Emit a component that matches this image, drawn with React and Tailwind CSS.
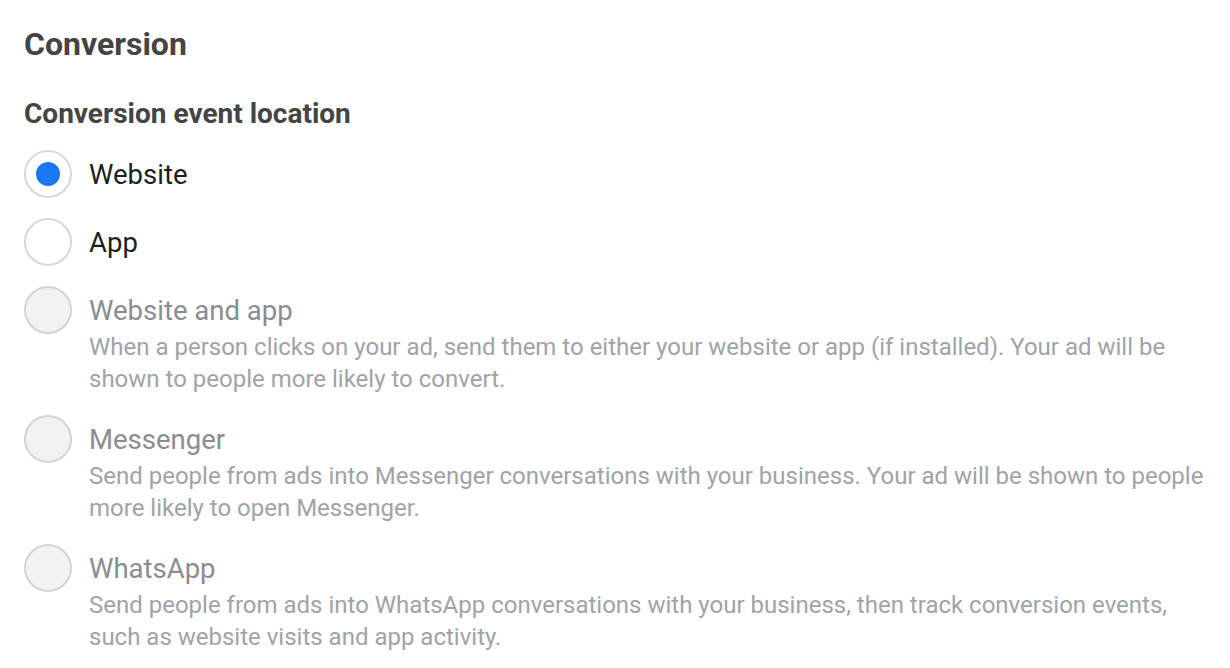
import React, { useState } from 'react'

const options = [
  { id: 'website', label: 'Website' },
  { id: 'app', label: 'App' },
  {
    id: 'website-app',
    label: 'Website and app',
    disabled: true,
    desc: 'When a person clicks on your ad, send them to either your website or app (if installed). Your ad will be shown to people more likely to convert.',
  },
  {
    id: 'messenger',
    label: 'Messenger',
    disabled: true,
    desc: 'Send people from ads into Messenger conversations with your business. Your ad will be shown to people more likely to open Messenger.',
  },
  {
    id: 'whatsapp',
    label: 'WhatsApp',
    disabled: true,
    desc: 'Send people from ads into WhatsApp conversations with your business, then track conversion events, such as website visits and app activity.',
  },
]

function Radio({ checked, disabled }) {
  return (
    <span
      className={
        'flex h-12 w-12 shrink-0 items-center justify-center rounded-full border-2 ' +
        (disabled ? 'border-[#d4d4d4] bg-[#f2f2f2]' : 'border-[#d8d8d8] bg-white')
      }
    >
      {checked && <span className="h-6 w-6 rounded-full bg-[#1877f2]" />}
    </span>
  )
}

export default function App() {
  const [selected, setSelected] = useState('website')

  return (
    <div className="min-h-screen bg-white pl-6 pr-2 pt-6 font-['Roboto',sans-serif]">
      <h2 className="text-[32px] font-bold leading-[40px] text-[#444]">Conversion</h2>

      <h3 className="mt-[33px] text-[28px] font-bold leading-[34px] text-[#444]">
        Conversion event location
      </h3>

      <div className="mt-[19px] flex flex-col gap-5">
        {options.map((o) => (
          <label
            key={o.id}
            className={'flex gap-[17px] ' + (o.disabled ? 'cursor-not-allowed' : 'cursor-pointer')}
            onClick={() => !o.disabled && setSelected(o.id)}
          >
            <Radio checked={selected === o.id} disabled={o.disabled} />
            <div className="flex flex-col">
              <span
                className={
                  'mt-[7px] text-[27.5px] leading-[36px] ' +
                  (o.disabled ? 'text-[#8a8d91]' : 'text-[#1c1e21]')
                }
              >
                {o.label}
              </span>
              {o.desc && (
                <p className="mt-[2px] text-[24px] leading-[32px] text-[#a0a3a8]">{o.desc}</p>
              )}
            </div>
          </label>
        ))}
      </div>
    </div>
  )
}
